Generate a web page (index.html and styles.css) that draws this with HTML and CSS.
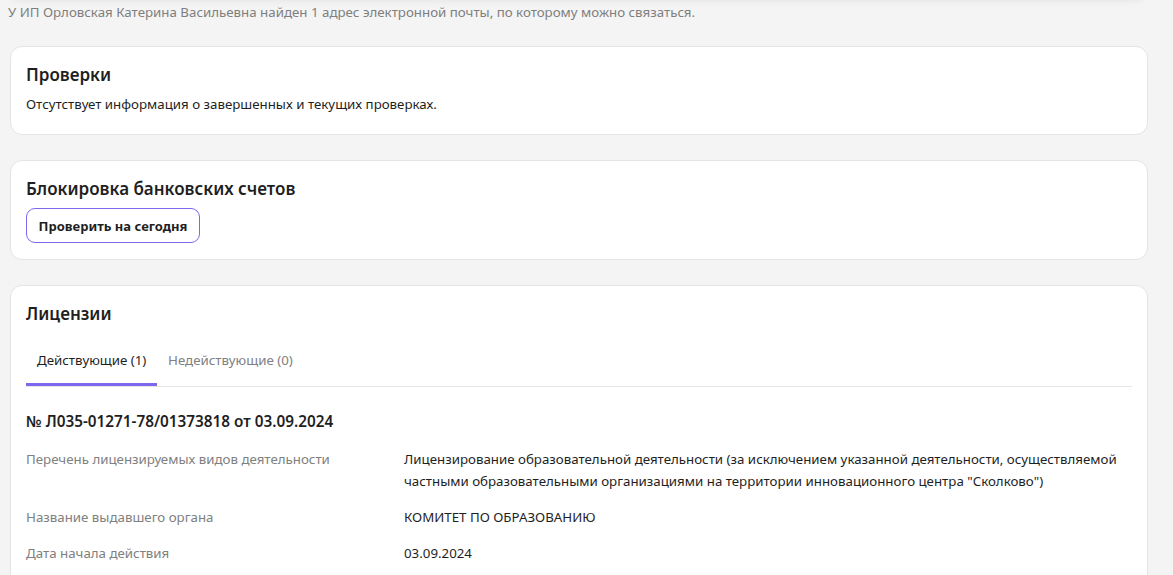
FILE: index.html
```html
<!DOCTYPE html>
<html lang="ru">
<head>
<meta charset="utf-8">
<link rel="stylesheet" href="styles.css">
</head>
<body>
<div class="page">
  <div class="prev-card"></div>
  <p class="note">У ИП Орловская Катерина Васильевна найден 1 адрес электронной почты, по которому можно связаться.</p>

  <section class="card card-checks">
    <h2 class="card-title">Проверки</h2>
    <p class="card-text">Отсутствует информация о завершенных и текущих проверках.</p>
  </section>

  <section class="card card-block">
    <h2 class="card-title">Блокировка банковских счетов</h2>
    <button class="btn-outline" type="button">Проверить на сегодня</button>
  </section>

  <section class="card card-lic">
    <h2 class="card-title">Лицензии</h2>
    <div class="tabs">
      <div class="tab tab-active">Действующие (1)</div>
      <div class="tab">Недействующие (0)</div>
    </div>
    <h3 class="lic-num">№ Л035-01271-78/01373818 от 03.09.2024</h3>
    <div class="rows">
      <div class="row">
        <div class="label">Перечень лицензируемых видов деятельности</div>
        <div class="value">Лицензирование образовательной деятельности (за исключением указанной деятельности, осуществляемой частными образовательными организациями на территории инновационного центра "Сколково")</div>
      </div>
      <div class="row">
        <div class="label">Название выдавшего органа</div>
        <div class="value">КОМИТЕТ ПО ОБРАЗОВАНИЮ</div>
      </div>
      <div class="row">
        <div class="label">Дата начала действия</div>
        <div class="value">03.09.2024</div>
      </div>
    </div>
  </section>
</div>
</body>
</html>
```

FILE: styles.css
```css
* { box-sizing: border-box; }
html, body { margin: 0; padding: 0; }
body {
  background: #f4f4f4;
  font-family: "Noto Sans", "Open Sans", sans-serif;
  color: #1f1f1f;
  overflow: hidden;
}
.page {
  width: 1138px;
  margin-left: 10px;
}
.prev-card {
  height: 20px;
  margin-top: -22px;
  margin-right: 3px;
  background: #fff;
  border-radius: 12px;
  box-shadow: 0 2px 8px rgba(0,0,0,0.08);
}
.note {
  margin: 5px 0 0 -2px;
  font-size: 13.3px;
  line-height: 18px;
  color: #7f7f7f;
}
.card {
  background: #fff;
  border: 1px solid #e4e4e4;
  border-radius: 12px;
  padding: 16px 15px 15px;
}
.card-checks { margin-top: 25px; height: 89px; }
.card-block { margin-top: 25px; height: 100px; }
.card-lic { margin-top: 25px; height: 400px; }
.card-title {
  margin: 0;
  font-size: 17px;
  font-weight: 600;
  line-height: 24px;
  color: #1f1f1f;
}
.card-text {
  margin: 8px 0 0;
  font-size: 13.3px;
  line-height: 18px;
  color: #1f1f1f;
}
.btn-outline {
  margin-top: 7px;
  height: 35px;
  padding: 0 10px;
  width: 174px;
  font-family: inherit;
  font-size: 13px;
  font-weight: 700;
  color: #1f1f1f;
  background: #fff;
  border: 1px solid #7b68ee;
  border-radius: 9px;
}
.tabs {
  display: flex;
  margin-top: 18px;
  border-bottom: 1px solid #e6e6e6;
}
.tab {
  padding: 0 11px;
  height: 42px;
  line-height: 32px;
  font-size: 13.3px;
  color: #808080;
  white-space: nowrap;
}
.tab-active {
  color: #1f1f1f;
  border-bottom: 3px solid #7b68ee;
  margin-bottom: -1px;
  width: 131px;
}
.lic-num {
  margin: 23px 0 0;
  font-size: 15.3px;
  font-weight: 600;
  line-height: 22px;
}
.rows { margin-top: 16px; }
.row {
  display: grid;
  grid-template-columns: 378px 1fr;
  margin-bottom: 14px;
}
.label {
  font-size: 13.3px;
  line-height: 22px;
  color: #808080;
}
.value {
  font-size: 13.3px;
  line-height: 22px;
  color: #1f1f1f;
  padding-right: 10px;
}
```
